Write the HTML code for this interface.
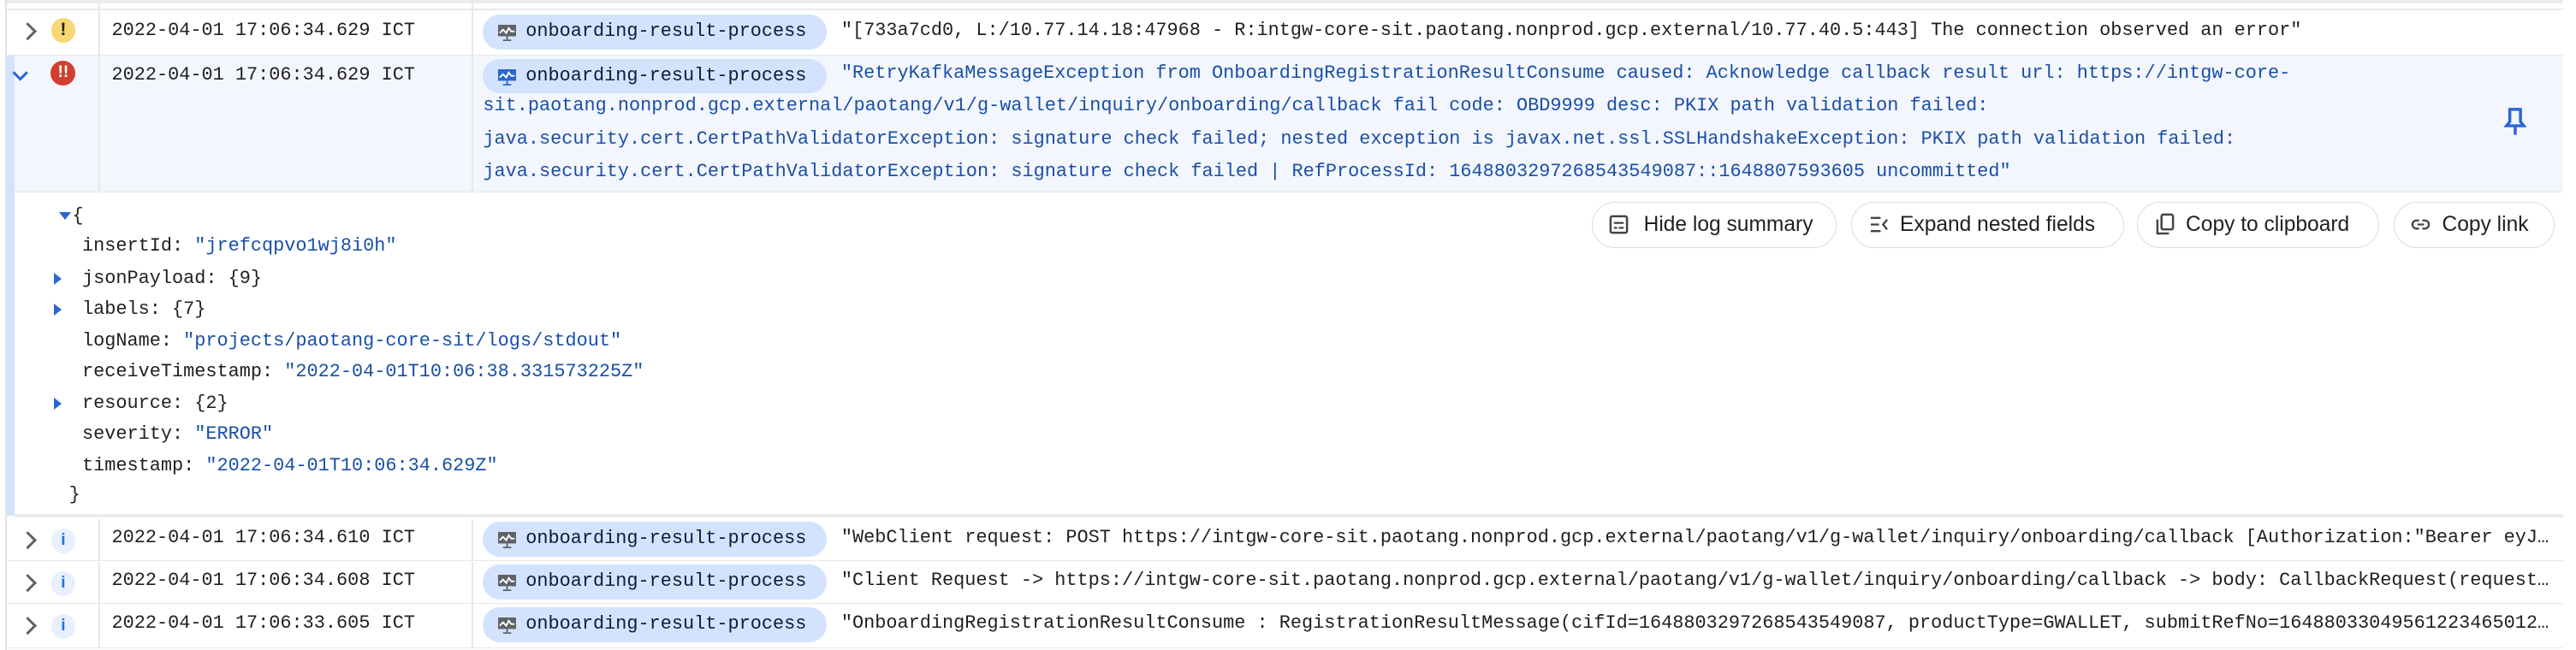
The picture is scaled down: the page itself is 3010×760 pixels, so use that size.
<!DOCTYPE html>
<html><head><meta charset="utf-8">
<style>
*{box-sizing:border-box;margin:0;padding:0}
html,body{width:3010px;height:760px;overflow:hidden;background:#fff}
#w{zoom:1.9196;width:1568px;height:396px;position:relative;font-family:"Liberation Mono",monospace;font-size:11.4px;color:#1f1f1f}
.a{position:absolute}
.row{position:absolute;left:4px;right:8px;border-bottom:1px solid #e8e8e8}
.vl{position:absolute;top:0;bottom:0;width:1px;background:#e8e8e8}
.chev{position:absolute;left:9px;width:8px;height:8px;border-right:1.6px solid #5f6368;border-bottom:1.6px solid #5f6368;transform:rotate(-45deg)}
.ic{position:absolute;left:31px;width:15px;height:15px;border-radius:50%;text-align:center;font-family:"Liberation Sans",sans-serif;font-weight:bold;font-size:11px;line-height:15px}
.date{position:absolute;left:64px;white-space:nowrap}
.chip{position:absolute;left:290px;width:209px;height:21px;border-radius:11px;background:#d3e3fd;white-space:nowrap;line-height:21px;padding-left:26px;color:#0b1d3a}
.chip svg{position:absolute;left:9px;top:6px}
.msg{position:absolute;left:508px;right:4px;white-space:nowrap;overflow:hidden;text-overflow:ellipsis}
.btn{position:absolute;top:123px;height:28px;border:1px solid #dadce0;border-radius:14px;font-family:"Liberation Sans",sans-serif;font-size:12.8px;line-height:27px;color:#1f1f1f;white-space:nowrap}
.btn svg{position:absolute;left:10px;top:7px}
.j{position:absolute;white-space:nowrap}
.s{color:#1a4fa6}
.tri{position:absolute;width:0;height:0;border-top:4px solid transparent;border-bottom:4px solid transparent;border-left:5px solid #2a66d4}
</style></head><body><div id="w">
<div class="a" style="left:3px;top:0;width:1px;height:396px;background:#e3e3e3"></div>
<div class="a" style="left:4px;top:0;right:8px;height:2px;background:#ececec"></div>
<div class="a" style="left:4px;top:5px;right:8px;height:1px;background:#e8e8e8"></div>
<div class="a" style="left:60px;top:0;width:1px;height:6px;background:#e8e8e8"></div>
<div class="a" style="left:287px;top:0;width:1px;height:6px;background:#e8e8e8"></div>

<div class="row" style="top:6px;height:28px">
 <div class="vl" style="left:56px"></div><div class="vl" style="left:283px"></div>
 <div class="chev" style="top:9px"></div>
 <div class="ic" style="left:27px;top:5px;background:#f7d774;color:#202124">!</div>
 <div class="date" style="top:6px">2022-04-01 17:06:34.629 ICT</div>
 <div class="chip" style="top:3px"><svg width="11" height="10" viewBox="0 0 11 10"><rect x="0" y="0" width="11" height="7" fill="#5f6368"/><path d="M1 5 L3 3 L5 5 L6.5 2 L8 4 L10 4" stroke="#fff" stroke-width="1" fill="none"/><rect x="5" y="7" width="1" height="2" fill="#5f6368"/><rect x="3" y="9" width="5" height="1" fill="#5f6368"/></svg>onboarding-result-process</div>
 <div class="msg" style="top:6px">"[733a7cd0, L:/10.77.14.18:47968 - R:intgw-core-sit.paotang.nonprod.gcp.external/10.77.40.5:443] The connection observed an error"</div>
</div>

<div class="a" style="left:4px;top:34px;width:5px;height:280px;background:#d3e3fd"></div>
<div class="row" style="top:34px;height:83px;left:9px;background:#f3f6fd">
 <div class="vl" style="left:51px"></div><div class="vl" style="left:278px"></div>
 <div class="a" style="left:0px;top:7px;width:7px;height:7px;border-right:1.6px solid #2a66d4;border-bottom:1.6px solid #2a66d4;transform:rotate(45deg)"></div>
 <div class="ic" style="left:22px;top:3px;background:#d23f31;color:#fff;font-size:10px">!!</div>
 <div class="date" style="left:59px;top:5px">2022-04-01 17:06:34.629 ICT</div>
 <div class="chip" style="left:285px;top:2px;background:#d3e3fd"><svg width="11" height="10" viewBox="0 0 11 10"><rect x="0" y="0" width="11" height="7" fill="#2a66d4"/><path d="M1 5 L3 3 L5 5 L6.5 2 L8 4 L10 4" stroke="#fff" stroke-width="1" fill="none"/><rect x="5" y="7" width="1" height="2" fill="#2a66d4"/><rect x="3" y="9" width="5" height="1" fill="#2a66d4"/></svg>onboarding-result-process</div>
 <div class="j s" style="left:503px;top:4px">"RetryKafkaMessageException from OnboardingRegistrationResultConsume caused: Acknowledge callback result url: https://intgw-core-</div>
 <div class="j s" style="left:285px;top:24px">sit.paotang.nonprod.gcp.external/paotang/v1/g-wallet/inquiry/onboarding/callback fail code: OBD9999 desc: PKIX path validation failed:</div>
 <div class="j s" style="left:285px;top:44px">java.security.cert.CertPathValidatorException: signature check failed; nested exception is javax.net.ssl.SSLHandshakeException: PKIX path validation failed:</div>
 <div class="j s" style="left:285px;top:64px">java.security.cert.CertPathValidatorException: signature check failed | RefProcessId: 1648803297268543549087::1648807593605 uncommitted"</div>
 <svg class="a" style="left:1514px;top:31px" width="16" height="18" viewBox="0 0 16 18"><path d="M4.5 1.5 H11 V9 L13 11.5 H2.5 L4.5 9 Z" fill="none" stroke="#2a66d4" stroke-width="1.8"/><path d="M7.8 11.5 V17" stroke="#2a66d4" stroke-width="1.8"/></svg>
</div>

<div class="tri" style="left:36px;top:129px;border-left:4px solid transparent;border-right:4px solid transparent;border-top:5px solid #2a66d4;border-bottom:0"></div>
<div class="j" style="left:44px;top:125px">{</div>
<div class="j" style="left:50px;top:143px">insertId: <span class="s">"jrefcqpvo1wj8i0h"</span></div>
<div class="tri" style="left:33px;top:166px"></div><div class="j" style="left:50px;top:163px">jsonPayload: {9}</div>
<div class="tri" style="left:33px;top:185px"></div><div class="j" style="left:50px;top:182px">labels: {7}</div>
<div class="j" style="left:50px;top:201px">logName: <span class="s">"projects/paotang-core-sit/logs/stdout"</span></div>
<div class="j" style="left:50px;top:220px">receiveTimestamp: <span class="s">"2022-04-01T10:06:38.331573225Z"</span></div>
<div class="tri" style="left:33px;top:242px"></div><div class="j" style="left:50px;top:239px">resource: {2}</div>
<div class="j" style="left:50px;top:258px">severity: <span class="s">"ERROR"</span></div>
<div class="j" style="left:50px;top:277px">timestamp: <span class="s">"2022-04-01T10:06:34.629Z"</span></div>
<div class="j" style="left:42px;top:295px">}</div>

<div class="btn" style="left:969px;width:149px;padding-left:31px"><svg width="12" height="12" viewBox="0 0 12 12"><rect x="1" y="1" width="10" height="10" rx="1" fill="none" stroke="#444" stroke-width="1.3"/><path d="M3 5h6M3 8h2M6 8h3" stroke="#444" stroke-width="1.2"/></svg>Hide log summary</div>
<div class="btn" style="left:1127px;width:166px;padding-left:29px"><svg width="12" height="12" viewBox="0 0 12 12"><path d="M1 2h6M1 6h5M1 10h6M11 3L8.5 6L11 9" stroke="#444" stroke-width="1.2" fill="none"/></svg>Expand nested fields</div>
<div class="btn" style="left:1301px;width:147px;padding-left:29px"><svg width="12" height="14" viewBox="0 0 12 14" style="top:6px"><rect x="4" y="1" width="7" height="9" rx="1" fill="none" stroke="#444" stroke-width="1.3"/><path d="M1.5 4v8.5h7" fill="none" stroke="#444" stroke-width="1.3"/></svg>Copy to clipboard</div>
<div class="btn" style="left:1457px;width:98px;padding-left:29px"><svg width="12" height="12" viewBox="0 0 12 12"><path d="M5 3.5H3.5a2.5 2.5 0 0 0 0 5H5M7 3.5h1.5a2.5 2.5 0 0 1 0 5H7M4 6h4" fill="none" stroke="#444" stroke-width="1.2"/></svg>Copy link</div>

<div class="a" style="left:9px;top:313px;right:8px;height:2px;background:#ececec"></div>

<div class="row" style="top:316px;height:26px">
 <div class="vl" style="left:56px"></div><div class="vl" style="left:283px"></div>
 <div class="chev" style="top:9px"></div>
 <div class="ic" style="left:27px;top:6px;background:#e8f0fe;color:#1a73e8;font-size:10px">i</div>
 <div class="date" style="top:5px">2022-04-01 17:06:34.610 ICT</div>
 <div class="chip" style="top:2px"><svg width="11" height="10" viewBox="0 0 11 10"><rect x="0" y="0" width="11" height="7" fill="#5f6368"/><path d="M1 5 L3 3 L5 5 L6.5 2 L8 4 L10 4" stroke="#fff" stroke-width="1" fill="none"/><rect x="5" y="7" width="1" height="2" fill="#5f6368"/><rect x="3" y="9" width="5" height="1" fill="#5f6368"/></svg>onboarding-result-process</div>
 <div class="msg" style="top:5px">"WebClient request: POST https://intgw-core-sit.paotang.nonprod.gcp.external/paotang/v1/g-wallet/inquiry/onboarding/callback [Authorization:"Bearer eyJhbGciOiJSUzI1NiJ9</div>
</div>
<div class="row" style="top:342px;height:26px">
 <div class="vl" style="left:56px"></div><div class="vl" style="left:283px"></div>
 <div class="chev" style="top:9px"></div>
 <div class="ic" style="left:27px;top:6px;background:#e8f0fe;color:#1a73e8;font-size:10px">i</div>
 <div class="date" style="top:5px">2022-04-01 17:06:34.608 ICT</div>
 <div class="chip" style="top:2px"><svg width="11" height="10" viewBox="0 0 11 10"><rect x="0" y="0" width="11" height="7" fill="#5f6368"/><path d="M1 5 L3 3 L5 5 L6.5 2 L8 4 L10 4" stroke="#fff" stroke-width="1" fill="none"/><rect x="5" y="7" width="1" height="2" fill="#5f6368"/><rect x="3" y="9" width="5" height="1" fill="#5f6368"/></svg>onboarding-result-process</div>
 <div class="msg" style="top:5px">"Client Request -&gt; https://intgw-core-sit.paotang.nonprod.gcp.external/paotang/v1/g-wallet/inquiry/onboarding/callback -&gt; body: CallbackRequest(requestId=abcdef</div>
</div>
<div class="row" style="top:368px;height:27px">
 <div class="vl" style="left:56px"></div><div class="vl" style="left:283px"></div>
 <div class="chev" style="top:9px"></div>
 <div class="ic" style="left:27px;top:6px;background:#e8f0fe;color:#1a73e8;font-size:10px">i</div>
 <div class="date" style="top:5px">2022-04-01 17:06:33.605 ICT</div>
 <div class="chip" style="top:2px"><svg width="11" height="10" viewBox="0 0 11 10"><rect x="0" y="0" width="11" height="7" fill="#5f6368"/><path d="M1 5 L3 3 L5 5 L6.5 2 L8 4 L10 4" stroke="#fff" stroke-width="1" fill="none"/><rect x="5" y="7" width="1" height="2" fill="#5f6368"/><rect x="3" y="9" width="5" height="1" fill="#5f6368"/></svg>onboarding-result-process</div>
 <div class="msg" style="top:5px">"OnboardingRegistrationResultConsume : RegistrationResultMessage(cifId=1648803297268543549087, productType=GWALLET, submitRefNo=16488033049561223465012345</div>
</div>
</div></body></html>
